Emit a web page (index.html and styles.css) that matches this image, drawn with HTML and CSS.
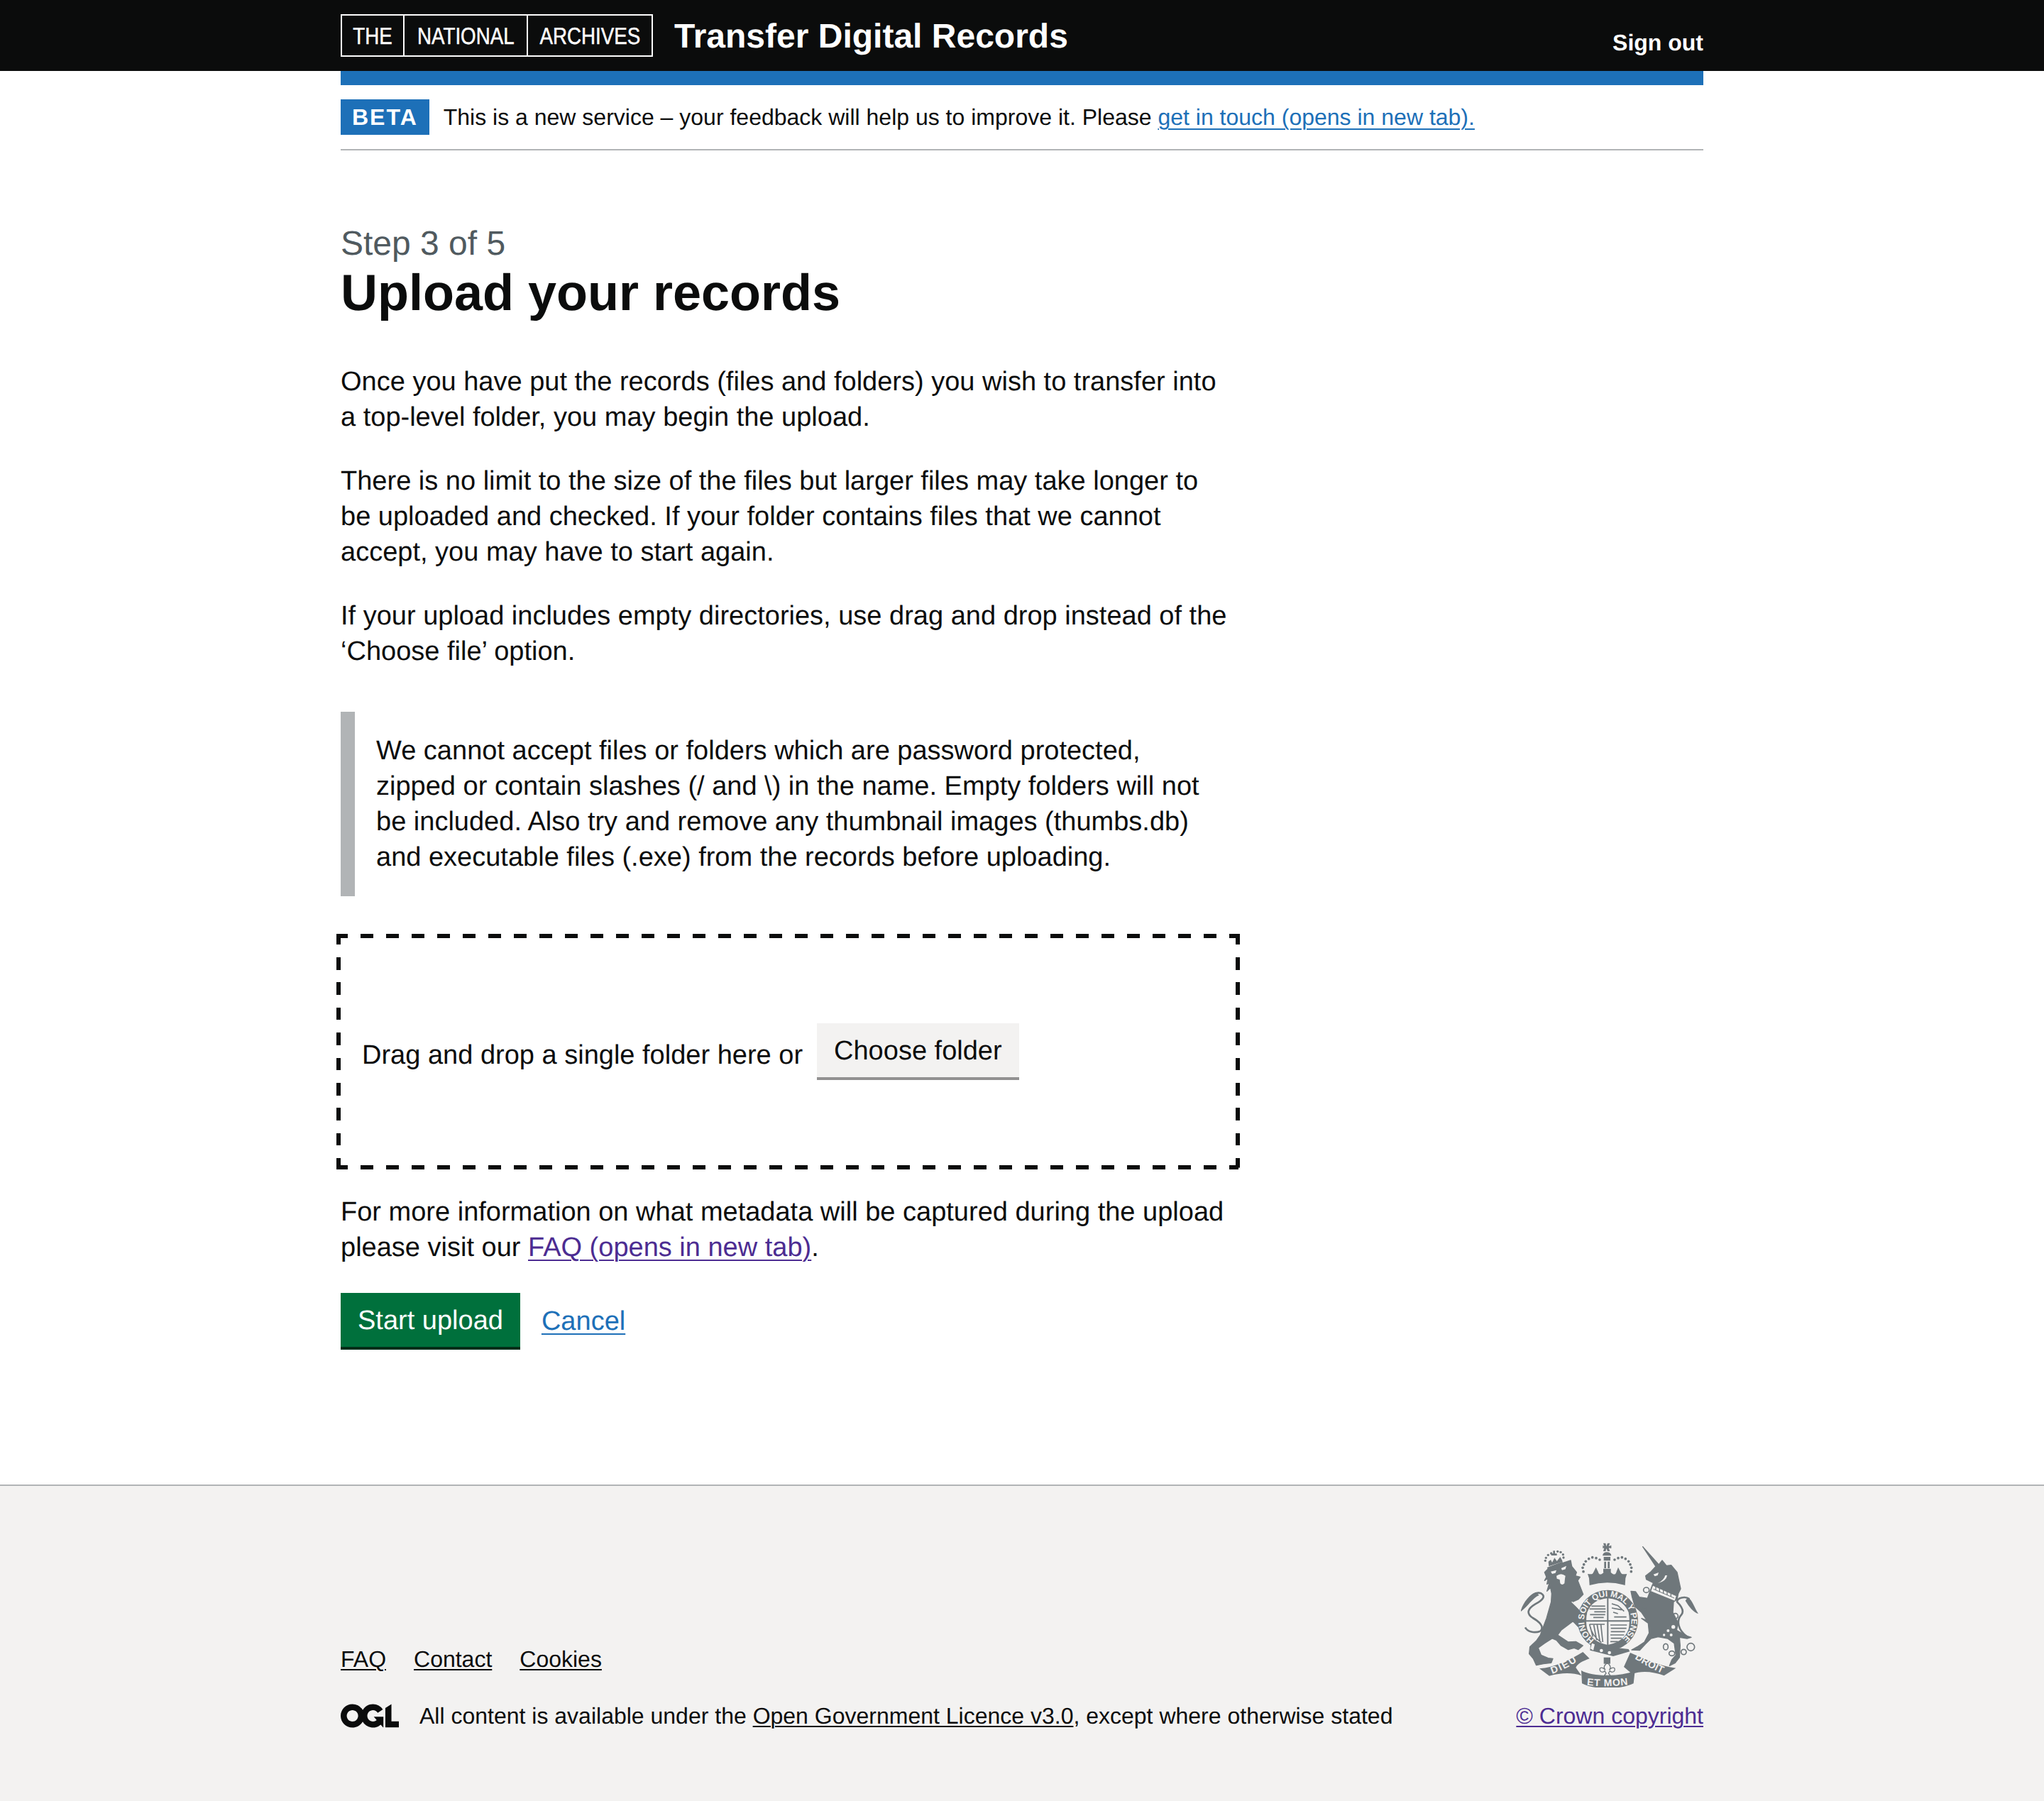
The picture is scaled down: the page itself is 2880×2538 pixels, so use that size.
FILE: index.html
```html
<!DOCTYPE html>
<html lang="en">
<head>
<meta charset="utf-8">
<title>Upload your records</title>
<link rel="stylesheet" href="styles.css">
</head>
<body>
<header class="site-header">
  <div class="container header-row">
    <div class="brand">
      <div class="tna-logo">
        <span class="tna-cell tna-the"><span class="tna-text">THE</span></span>
        <span class="tna-cell tna-national"><span class="tna-text">NATIONAL</span></span>
        <span class="tna-cell tna-archives"><span class="tna-text">ARCHIVES</span></span>
      </div>
      <a class="service-name" href="#">Transfer Digital Records</a>
    </div>
    <a class="sign-out" href="#">Sign out</a>
  </div>
</header>
<div class="container">
  <div class="blue-bar"></div>
  <div class="phase-banner">
    <strong class="phase-tag">BETA</strong>
    <span>This is a new service – your feedback will help us to improve it. Please <a class="link" href="#">get in touch (opens in new tab).</a></span>
  </div>
  <main class="main">
    <div class="column">
      <span class="caption">Step 3 of 5</span>
      <h1 class="title">Upload your records</h1>
      <p class="body">Once you have put the records (files and folders) you wish to transfer into a top-level folder, you may begin the upload.</p>
      <p class="body">There is no limit to the size of the files but larger files may take longer to be uploaded and checked. If your folder contains files that we cannot accept, you may have to start again.</p>
      <p class="body">If your upload includes empty directories, use drag and drop instead of the ‘Choose file’ option.</p>
      <div class="inset">We cannot accept files or folders which are password protected, zipped or contain slashes (/ and \) in the name. Empty folders will not be included. Also try and remove any thumbnail images (thumbs.db) and executable files (.exe) from the records before uploading.</div>
      <div class="dropzone">
        <span class="drop-label">Drag and drop a single folder here or</span>
        <button class="btn btn-secondary" type="button">Choose folder</button>
      </div>
      <p class="body after-drop">For more information on what metadata will be captured during the upload please visit our <a class="link visited" href="#">FAQ (opens in new tab)</a>.</p>
      <div class="actions">
        <button class="btn btn-primary" type="button">Start upload</button>
        <a class="link cancel" href="#">Cancel</a>
      </div>
    </div>
  </main>
</div>
<footer class="footer">
  <div class="container footer-row">
    <div class="footer-left">
      <ul class="footer-links">
        <li><a class="footer-link" href="#">FAQ</a></li>
        <li><a class="footer-link" href="#">Contact</a></li>
        <li><a class="footer-link" href="#">Cookies</a></li>
      </ul>
      <div class="licence">
        <svg class="ogl" viewBox="0 0 483.2 195.7" aria-hidden="true"><path d="M421.5 142.8V.1l-50.7 32.3v161.1h112.4v-50.7zm-122.3-9.6A47.12 47.12 0 0 1 221 97.8c0-26 21.1-47.1 47.1-47.1 16.7 0 31.4 8.7 39.7 21.8l42.7-27.2A97.63 97.63 0 0 0 268.1 0c-36.5 0-68.3 20.1-85.1 49.7A98 98 0 0 0 97.8 0C43.9 0 0 43.9 0 97.8s43.9 97.8 97.8 97.8c36.5 0 68.3-20.1 85.1-49.7a97.76 97.76 0 0 0 149.6 25.4l19.4 22.2h3v-87.8h-80l24.3 27.5zM97.8 145c-26 0-47.1-21.1-47.1-47.1s21.1-47.1 47.1-47.1 47.2 21 47.2 47S123.8 145 97.8 145"/></svg>
        <span>All content is available under the <a class="footer-link" href="#">Open Government Licence v3.0</a>, except where otherwise stated</span>
      </div>
    </div>
    <div class="footer-right">
      <svg class="crest" viewBox="130 100 750 612" aria-hidden="true">
        <defs>
          <path id="motto-arc" d="M440,510 A100,100 0 1 1 554,510"/>
          <path id="rib-l" d="M262,655 Q320,635 376,596"/>
          <path id="rib-c" d="M408,702 Q495,712 585,700"/>
          <path id="rib-r" d="M610,590 Q665,625 735,656"/>
        </defs>
        <path class="c-line w8" d="M212,474 C185,484 158,476 148,458 M212,474 C232,456 205,432 180,418 C150,398 160,378 190,360 C225,342 235,325 215,314 C190,306 170,325 160,345"/>
        <path class="c-fill" d="M128,392 C138,355 165,318 195,310 L207,322 C178,334 158,372 128,392Z"/>
        <path class="c-fill c-soft" d="M230,225 L250,205 L340,175 L345,200 L365,225 L360,240 L380,245 L370,260 L380,285 L393,318 L372,340 L345,352 L372,382 L398,420 L392,452 L372,455 L350,432 L340,440 L300,470 L285,490 L330,520 L362,518 L392,535 L372,552 L355,545 L330,552 L300,535 L280,512 L262,505 L230,525 L203,545 L215,575 L245,588 L265,590 L258,608 L225,612 L195,618 L182,590 L165,570 L168,540 L195,515 L212,490 L238,420 L258,350 L260,315 L255,290 L240,305 L250,270 L240,275 L245,250 L230,260 L238,245Z"/>
        <path class="c-bg" d="M256,222 L280,216 L276,228 L262,232Z M300,208 L322,198 L318,212 L304,216Z M280,240 Q300,225 318,240 L316,252 L314,272 Q304,282 296,272 L294,256 L282,252Z"/>
        <path class="c-line-bg w4" d="M345,350 L398,400"/>
        <path class="c-fill" d="M240,205 L305,180 L310,192 L248,218Z"/>
        <path class="c-fill" d="M246,180 L256,172 L262,184 L272,164 L282,178 L296,160 L304,174 L306,180 L248,200Z"/>
        <path class="c-fill" d="M258,146 H266 V134 H274 V146 H282 V154 H258Z"/>
        <g class="c-fill">
          <circle cx="236" cy="164" r="5"/><circle cx="245" cy="152" r="5"/><circle cx="258" cy="145" r="5"/><circle cx="285" cy="137" r="5"/><circle cx="298" cy="140" r="5"/><circle cx="308" cy="150" r="5"/><circle cx="233" cy="176" r="5"/><circle cx="310" cy="163" r="5"/>
        </g>
        <path class="c-fill" d="M478,102 H488 L491,116 L496,102 H506 L501,115 L512,111 V124 L501,122 L506,136 H496 L491,124 L488,136 H478 L482,122 L476,124 V111 L482,115Z"/>
        <path class="c-fill" d="M475,155 Q477,140 493,140 Q510,140 512,155Z"/>
        <path class="c-fill" d="M480,160 H508 V176 H480Z M482,180 H490 V208 H482Z M497,180 H505 V208 H497Z M478,210 H510 V225 H478Z"/>
        <g class="c-fill">
          <circle cx="394" cy="222" r="5.5"/><circle cx="391" cy="206" r="5.5"/><circle cx="396" cy="192" r="5.5"/><circle cx="404" cy="179" r="5.5"/><circle cx="417" cy="168" r="5.5"/><circle cx="432" cy="162" r="5.5"/><circle cx="448" cy="165" r="5.5"/><circle cx="463" cy="172" r="5.5"/>
          <circle cx="596" cy="222" r="5.5"/><circle cx="597" cy="206" r="5.5"/><circle cx="592" cy="192" r="5.5"/><circle cx="585" cy="179" r="5.5"/><circle cx="572" cy="168" r="5.5"/><circle cx="557" cy="162" r="5.5"/><circle cx="541" cy="165" r="5.5"/><circle cx="526" cy="172" r="5.5"/>
        </g>
        <path class="c-fill" d="M412,232 C425,232 432,238 438,222 L447,204 L456,222 C460,238 470,236 480,225 L495,212 L510,225 C520,236 530,238 534,222 L541,204 L550,222 C556,238 565,232 578,232 L572,250 L570,280 Q495,258 420,280 L418,250Z"/>
        <path class="c-bg" d="M426,286 Q495,262 564,286 Q568,296 556,300 Q495,282 436,300 Q422,296 426,286Z"/>
        <circle class="c-fill" cx="497" cy="428" r="128"/>
        <path class="c-bg" d="M410,395 Q430,340 497,335 Q565,340 585,395 Q592,430 585,465 Q565,520 497,532 Q430,520 410,465 Q402,430 410,395Z"/>
        <path class="c-line w6" d="M497,333 V534 M404,431 H590"/>
        <g class="c-stripe">
          <path d="M428,368 H486 M420,380 H488 M440,392 H488 M422,404 H486 M436,416 H480"/>
          <path d="M514,358 L540,366 L566,390 M514,376 L556,384 M520,394 L540,400 M524,414 L576,414"/>
          <path d="M508,448 H578 M510,462 H576 M510,476 H570 M508,490 H566 M510,504 H556 M508,518 H540"/>
          <path d="M420,445 H484 M424,458 L434,498 M438,448 L450,512 M452,446 L464,518 M468,446 L476,520 M420,445 Q426,490 470,522"/>
        </g>
        <text class="ring-text"><textPath href="#motto-arc" textLength="500" lengthAdjust="spacing">HONI SOIT QUI MAL Y PENSE</textPath></text>
        <path class="c-fill" d="M425,525 L445,532 L585,550 L590,560 L520,580 L450,562 L422,555Z"/>
        <path class="c-bg" d="M430,525 L442,530 L436,555 L424,548Z"/>
        <circle class="c-bg" cx="470" cy="556" r="7"/><circle class="c-bg" cx="504" cy="565" r="7"/>
        <path class="c-line w8" d="M832,497 C795,470 785,430 808,405 C825,385 800,360 790,350 C790,332 825,325 842,338"/>
        <path class="c-fill" d="M835,332 C855,340 862,375 880,400 C860,395 840,370 825,345Z"/>
        <path class="c-fill c-soft" d="M645,117 L713,193 L727,175 L745,197 L765,195 L790,225 L805,295 L795,315 L790,340 L775,350 L772,395 L795,440 L788,470 L825,492 L850,500 L832,505 L800,500 L803,535 L800,585 L782,608 L758,620 L768,595 L785,575 L778,525 L750,505 L710,498 L680,505 L655,530 L632,555 L598,553 L625,538 L652,520 L672,482 L668,440 L640,420 L662,428 L640,395 L612,370 L600,330 L595,305 L615,307 L630,330 L665,335 L685,280 L690,270 L660,255 L657,240 L680,222 L700,200Z"/>
        <path class="c-bg" d="M690,234 L712,226 L708,238 L696,242Z M748,238 Q745,262 708,272 Q735,258 740,238Z"/>
        <path class="c-bg" d="M688,282 L786,326 L780,345 L680,305Z"/>
        <path class="c-line w3" d="M690,296 L778,334"/>
        <path class="c-line w4" d="M700,286 V300 M716,292 V308 M732,300 V316 M748,306 V322 M764,312 V328"/>
        <g class="c-ring">
          <ellipse cx="660" cy="300" rx="12" ry="11"/><ellipse cx="650" cy="386" rx="12" ry="11"/><ellipse cx="783" cy="410" rx="11" ry="11"/>
          <ellipse cx="742" cy="540" rx="10" ry="13"/><ellipse cx="768" cy="568" rx="12" ry="10"/><ellipse cx="818" cy="562" rx="11" ry="11"/><ellipse cx="848" cy="541" rx="16" ry="16"/>
        </g>
        <g class="c-bg">
          <circle cx="774" cy="456" r="8"/><circle cx="752" cy="472" r="6"/><circle cx="765" cy="490" r="6"/><circle cx="735" cy="490" r="5"/>
        </g>
        <path class="c-fill" d="M208,632 C270,628 340,595 392,562 L420,590 C392,600 368,612 362,628 L386,662 C345,648 300,650 250,663Z"/>
        <path class="c-fill" d="M565,625 L592,565 C650,590 715,622 785,630 L735,662 C690,645 640,640 600,655Z"/>
        <path class="c-fill" d="M385,640 C430,668 560,668 612,640 L606,695 C550,722 435,722 388,695Z"/>
        <path class="c-fill" d="M480,585 H508 V612 H480Z"/>
        <path class="c-fleur" d="M495,608 C510,620 512,628 503,638 C515,625 530,625 526,640 C522,650 510,648 506,642 L500,652 L508,662 H482 L490,652 L484,642 C480,648 468,650 464,640 C460,625 475,625 487,638 C478,628 480,620 495,608Z"/>
        <text class="rib-text"><textPath href="#rib-l" textLength="118">DIEU</textPath></text>
        <text class="rib-text"><textPath href="#rib-c" textLength="175">ET MON</textPath></text>
        <text class="rib-text"><textPath href="#rib-r" textLength="132">DROIT</textPath></text>
      </svg>
      <a class="link visited crown" href="#">© Crown copyright</a>
    </div>
  </div>
</footer>
</body>
</html>
```

FILE: styles.css
```css
* { box-sizing: border-box; }
html, body { margin: 0; padding: 0; }
body {
  font-family: "Liberation Sans", Arial, sans-serif;
  color: #0b0c0c;
  background: #fff;
  font-size: 38px;
  line-height: 50px;
  text-rendering: geometricPrecision;
}
.container { width: 1920px; margin: 0 auto; }

.site-header { background: #0b0c0c; height: 100px; }
.header-row { display: flex; justify-content: space-between; height: 100px; }
.brand { display: flex; align-items: center; gap: 30px; }
.tna-logo {
  display: flex;
  height: 60px;
  border: 2px solid #fff;
  color: #fff;
  font-size: 33px;
  line-height: 58px;
}
.tna-cell { display: flex; justify-content: center; }
.tna-text { display: block; transform: scaleX(0.84); white-space: nowrap; -webkit-text-stroke: 0.5px #fff; }
.tna-the { width: 86px; }
.tna-national { width: 174px; border-left: 2px solid #fff; }
.tna-archives { width: 176px; border-left: 2px solid #fff; }
.service-name { color: #fff; font-weight: 700; font-size: 48px; line-height: 60px; margin-top: 3px; text-decoration: none; }
.sign-out {
  color: #fff;
  font-weight: 700;
  font-size: 32px;
  line-height: 40px;
  text-decoration: none;
  align-self: flex-end;
  margin-bottom: 20px;
}

.blue-bar { height: 20px; background: #1d70b8; }
.phase-banner {
  display: flex;
  align-items: center;
  gap: 20px;
  padding: 20px 0;
  height: 92px;
  border-bottom: 2px solid #b1b4b6;
  font-size: 32px;
  line-height: 50px;
}
.phase-tag {
  background: #1d70b8;
  color: #fff;
  font-size: 32px;
  line-height: 50px;
  height: 50px;
  padding: 0 16px;
  letter-spacing: 2px;
}
.link { color: #1d70b8; text-decoration: underline; text-decoration-thickness: 2px; text-underline-offset: 5px; }
.link.visited { color: #4c2c92; }

.main { padding: 103px 0 190px; }
.column { width: 1250px; }
.caption { display: block; color: #505a5f; font-size: 48px; line-height: 58px; }
.title { margin: 0 0 60px; font-size: 72px; line-height: 80px; font-weight: 700; }
.body { margin: 0 0 40px; }
.inset {
  margin-top: 60px;
  padding: 30px;
  border-left: 20px solid #b1b4b6;
}
.dropzone {
  display: flex;
  align-items: center;
  gap: 20px;
  width: 1273px;
  height: 332px;
  margin: 53px 0 0 -6px;
  padding: 0 36px;
  background-image:
    repeating-linear-gradient(90deg, #0b0c0c 0 18px, transparent 18px 36px),
    repeating-linear-gradient(90deg, #0b0c0c 0 18px, transparent 18px 36px),
    repeating-linear-gradient(180deg, #0b0c0c 0 17.5px, transparent 17.5px 35.4px),
    repeating-linear-gradient(180deg, #0b0c0c 0 17.5px, transparent 17.5px 35.4px);
  background-size: 100% 6px, 100% 6px, 6px 100%, 6px 100%;
  background-position: -2px 0, -2px 100%, 0 -2.4px, 100% -2.4px;
  background-repeat: no-repeat;
}
.drop-label { margin-top: 10px; }
.btn {
  font-family: inherit;
  font-size: 38px;
  line-height: 50px;
  border: 0;
  padding: 14px 24px 12px;
  height: 80px;
  border-bottom: 4px solid transparent;
  text-rendering: geometricPrecision;
}
.btn-secondary { background: #f3f2f1; color: #0b0c0c; border-bottom-color: #929191; }
.btn-primary { background: #00703c; color: #fff; border-bottom-color: #002d18; }
.after-drop { margin: 35px 0 0; }
.actions { display: flex; align-items: center; gap: 30px; margin-top: 39px; }

.footer {
  background: #f3f2f1;
  border-top: 2px solid #b1b4b6;
  font-size: 32px;
  line-height: 40px;
  padding-bottom: 100px;
}
.footer-row { display: flex; justify-content: space-between; align-items: flex-end; padding-top: 80px; }
.footer-links { display: flex; gap: 39px; list-style: none; margin: 0 0 40px; padding: 0; }
.footer-link { color: #0b0c0c; text-decoration: underline; text-decoration-thickness: 2px; text-underline-offset: 3px; }
.licence { display: flex; align-items: center; gap: 29px; }
.ogl { width: 82px; height: 34px; fill: #0b0c0c; display: block; }
.footer-right { display: flex; flex-direction: column; align-items: center; gap: 20px; }
.crest { width: 250px; height: 204px; display: block; }
.crown { white-space: nowrap; text-underline-offset: 3px; }

.c-fill { fill: #6f777b; }
.c-soft { stroke: #6f777b; stroke-width: 4; stroke-linejoin: round; }
.c-bg { fill: #f3f2f1; }
.c-line { fill: none; stroke: #6f777b; }
.c-line-bg { fill: none; stroke: #f3f2f1; }
.c-stripe { fill: none; stroke: #6f777b; stroke-width: 5; }
.c-ring { fill: none; stroke: #6f777b; stroke-width: 5; }
.c-fleur { fill: #f3f2f1; stroke: #6f777b; stroke-width: 4; }
.w3 { stroke-width: 3; }
.w4 { stroke-width: 4; }
.w6 { stroke-width: 6; }
.w8 { stroke-width: 8; }
.ring-text { fill: #f3f2f1; font-size: 36px; font-weight: 700; font-family: "Liberation Sans", sans-serif; }
.rib-text { fill: #f3f2f1; font-size: 42px; font-weight: 700; font-family: "Liberation Sans", sans-serif; }
```
